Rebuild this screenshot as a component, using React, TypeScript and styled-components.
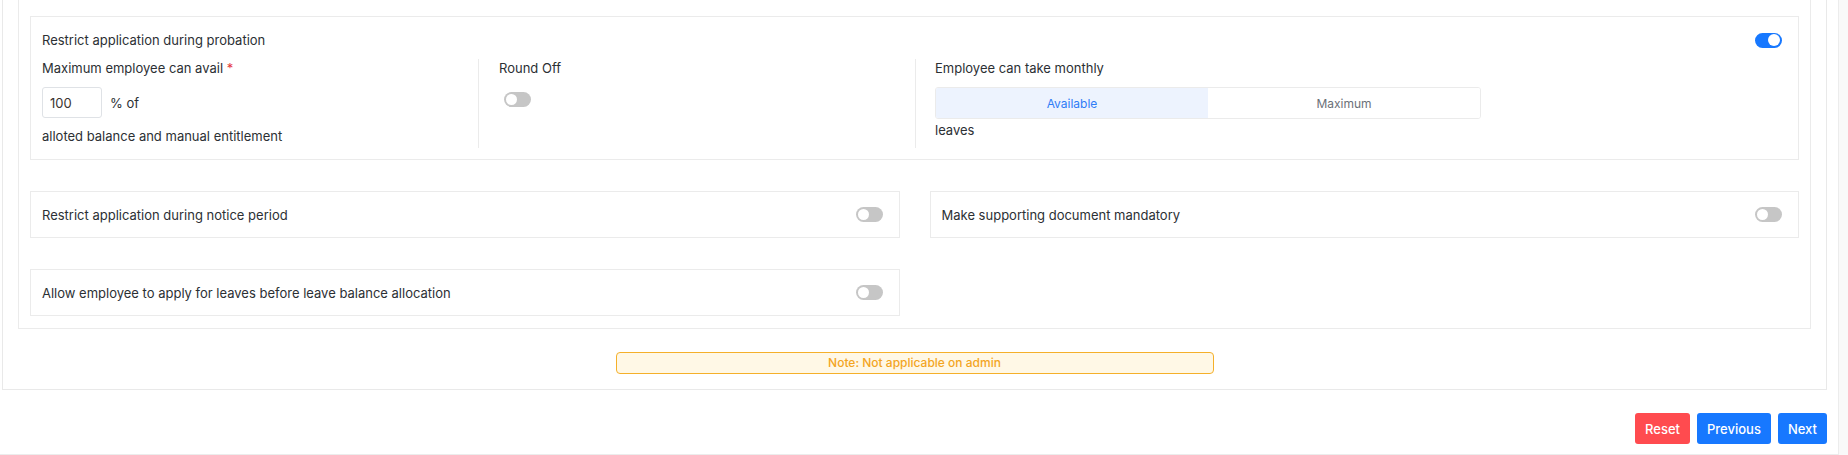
import React from "react";
import styled, { createGlobalStyle } from "styled-components";

interface SwitchProps {
   on?: boolean;
}

const Toggle = ({ on }: SwitchProps) => (
   <Track $on={on}>
      <Knob $on={on} />
   </Track>
);

const SettingCard = ({ label }: { label: string }) => (
   <Card>
      <span>{label}</span>
      <Toggle />
   </Card>
);

const App = () => {
   return (
      <>
         <GlobalStyle />
         <Page>
            <Main>
               <Frame>
                  <Panel>
                     <Probation>
                        <TitleRow>
                           <span>Restrict application during probation</span>
                           <Toggle on />
                        </TitleRow>

                        <Columns>
                           <Column>
                              <Label>
                                 Maximum employee can avail <Star>*</Star>
                              </Label>
                              <InputRow>
                                 <Input defaultValue="100" />
                                 <span>% of</span>
                              </InputRow>
                              <Line>alloted balance and manual entitlement</Line>
                           </Column>

                           <Column $divided>
                              <Label>Round Off</Label>
                              <SwitchWrap>
                                 <Toggle />
                              </SwitchWrap>
                           </Column>

                           <Column $divided $pad={19}>
                              <Label>Employee can take monthly</Label>
                              <Segmented>
                                 <Segment $active>Available</Segment>
                                 <Segment>Maximum</Segment>
                              </Segmented>
                              <Leaves>leaves</Leaves>
                           </Column>
                        </Columns>
                     </Probation>

                     <CardGrid>
                        <SettingCard label="Restrict application during notice period" />
                        <SettingCard label="Make supporting document mandatory" />
                        <SettingCard label="Allow employee to apply for leaves before leave balance allocation" />
                     </CardGrid>
                  </Panel>

                  <Note>Note: Not applicable on admin</Note>
               </Frame>

               <Footer>
                  <Button $color="#ff4b4f">Reset</Button>
                  <Button $color="#1778ff">Previous</Button>
                  <Button $color="#1778ff">Next</Button>
               </Footer>
            </Main>
            <Scroll />
         </Page>
      </>
   );
};

const GlobalStyle = createGlobalStyle`
   html, body {
      margin: 0;
      background: #fff;
   }

   body {
      font-family: Inter, "Noto Sans", sans-serif;
      font-size: 13px;
      color: #2c3034;
   }

   * {
      box-sizing: border-box;
   }
`;

const Page = styled.div`
   display: grid;
   grid-template-columns: 1839px 1fr;
   height: 455px;
   overflow: hidden;
`;

const Main = styled.div`
   display: flex;
   flex-direction: column;
   border-right: 1px solid #ececec;
   border-bottom: 1px solid #ececec;
   padding: 0 11px 10px 2px;
`;

const Scroll = styled.div`
   background: #f9f9f9;
`;

const Frame = styled.div`
   border: 1px solid #e9e9e9;
   border-top: none;
   padding: 0 15px 15px 15px;
`;

const Panel = styled.div`
   display: flex;
   flex-direction: column;
   gap: 31px;
   border: 1px solid #ebebeb;
   border-top: none;
   padding: 16px 11px 12px 11px;
`;

const Probation = styled.div`
   border: 1px solid #ebebeb;
   padding: 13px 16px 11px 11px;
`;

const TitleRow = styled.div`
   display: flex;
   align-items: center;
   justify-content: space-between;
   line-height: 20px;
`;

const Columns = styled.div`
   display: grid;
   grid-template-columns: 436px 437px 1fr;
   margin-top: 9px;
`;

const Column = styled.div<{ $divided?: boolean; $pad?: number }>`
   min-height: 89px;
   padding-left: ${(p) => (p.$divided ? `${p.$pad ?? 20}px` : "0")};
   border-left: ${(p) => (p.$divided ? "1px solid #ebebeb" : "none")};
`;

const Label = styled.div`
   line-height: 19px;
`;

const Leaves = styled.div`
   line-height: 20px;
   margin-top: 1px;
`;

const Star = styled.span`
   color: #e5383b;
`;

const InputRow = styled.div`
   display: flex;
   align-items: center;
   gap: 8px;
   margin-top: 9px;
`;

const Input = styled.input`
   width: 60px;
   height: 31px;
   padding: 0 7px;
   border: 1px solid #dfe2e6;
   border-radius: 3px;
   font-family: Inter, "Noto Sans", sans-serif;
   font-size: 13px;
   color: #3a3330;
   outline: none;
`;

const Line = styled.div`
   margin-top: 9px;
   line-height: 19px;
`;

const SwitchWrap = styled.div`
   margin: 14px 0 0 5px;
`;

const Track = styled.span<{ $on?: boolean }>`
   display: inline-flex;
   align-items: center;
   justify-content: ${(p) => (p.$on ? "flex-end" : "flex-start")};
   width: 27px;
   height: 15px;
   padding: 0 2px;
   border-radius: 8px;
   background: ${(p) => (p.$on ? "#1778ff" : "#c6c6c6")};
   flex-shrink: 0;
`;

const Knob = styled.span<{ $on?: boolean }>`
   width: ${(p) => (p.$on ? "12px" : "11px")};
   height: ${(p) => (p.$on ? "12px" : "11px")};
   border-radius: 50%;
   background: #fff;
`;

const Segmented = styled.div`
   display: grid;
   grid-template-columns: 272px 1fr;
   width: 546px;
   height: 32px;
   margin-top: 9px;
   border: 1px solid #ebebeb;
   border-radius: 3px;
   overflow: hidden;
`;

const Segment = styled.div<{ $active?: boolean }>`
   display: flex;
   align-items: center;
   justify-content: center;
   font-size: 12px;
   color: ${(p) => (p.$active ? "#2f7cf6" : "#6b7078")};
   background: ${(p) => (p.$active ? "#edf3fe" : "#fff")};
`;

const CardGrid = styled.div`
   display: grid;
   grid-template-columns: 1fr 1fr;
   column-gap: 30px;
   row-gap: 31px;
`;

const Card = styled.div`
   display: flex;
   align-items: center;
   justify-content: space-between;
   height: 47px;
   padding: 0 16px 0 11px;
   border: 1px solid #ebebeb;
`;

const Note = styled.div`
   width: 598px;
   height: 22px;
   margin: 23px auto 0;
   border: 1px solid #f5b02a;
   border-radius: 4px;
   background: #fff8e6;
   color: #f3a51f;
   font-size: 12px;
   font-weight: 500;
   line-height: 20px;
   text-align: center;
`;

const Footer = styled.div`
   display: flex;
   justify-content: flex-end;
   gap: 7px;
   margin-top: 23px;
`;

const Button = styled.button<{ $color: string }>`
   height: 31px;
   padding: 0 10px;
   border: none;
   border-radius: 3px;
   background: ${(p) => p.$color};
   color: #fff;
   font-family: Inter, "Noto Sans", sans-serif;
   font-size: 13px;
   font-weight: 500;
   cursor: pointer;
`;

export default App;
